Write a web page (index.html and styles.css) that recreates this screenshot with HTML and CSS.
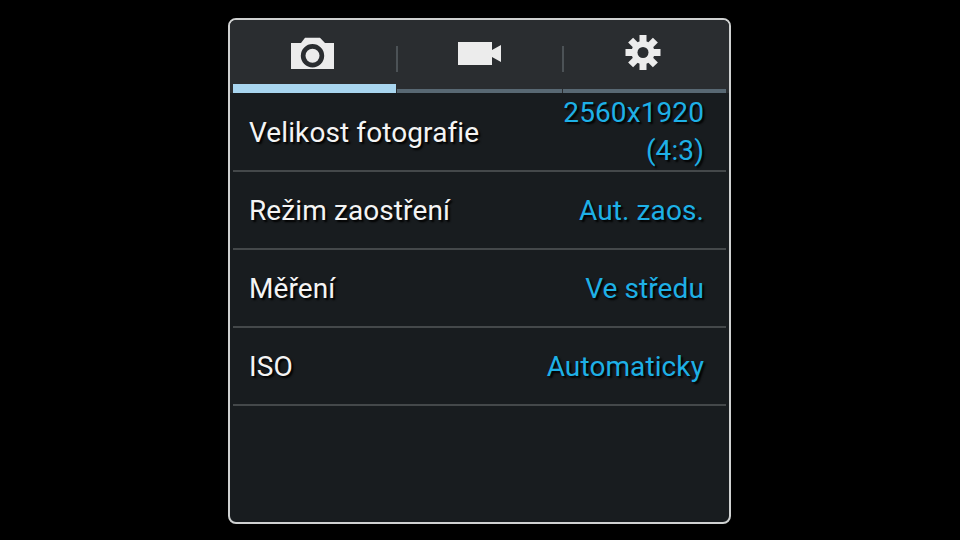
FILE: index.html
```html
<!DOCTYPE html>
<html lang="cs">
<head>
<meta charset="utf-8">
<title>Nastavení fotoaparátu</title>
<link rel="stylesheet" href="styles.css">
</head>
<body>
<main class="panel">
  <nav class="tabs">
    <div class="tab tab-active">
      <svg class="icon" width="43" height="32" viewBox="0 0 43 32"><path fill="#ececec" fill-rule="evenodd" d="M0 6H10L14 .7H29L34 6H43V32H0ZM21.500 7A11.700 11.700 0 1 0 21.500 30.400A11.700 11.700 0 1 0 21.500 7Z"/><circle cx="21.500" cy="18.700" r="7" fill="#ececec"/></svg>
    </div>
    <div class="tab tab-mid">
      <svg class="icon icon-video" width="43" height="23" viewBox="0 0 43 23"><path fill="#ececec" d="M0 0H34V23H0ZM34 8L43 3V20L34 15Z"/></svg>
    </div>
    <div class="tab tab-last">
      <svg class="icon icon-gear" width="36" height="36" viewBox="0 0 36 36">
        <g fill="#ececec">
          <circle cx="18" cy="17.500" r="11.500"/>
          <rect x="14.500" y="0" width="7" height="35"/>
          <rect x="14.500" y="0" width="7" height="35" transform="rotate(45 18 17.500)"/>
          <rect x="14.500" y="0" width="7" height="35" transform="rotate(90 18 17.500)"/>
          <rect x="14.500" y="0" width="7" height="35" transform="rotate(135 18 17.500)"/>
        </g>
        <circle cx="18" cy="17.500" r="5.500" fill="#2a2d30"/>
      </svg>
    </div>
  </nav>
  <section class="rows">
    <div class="row"><span class="label">Velikost fotografie</span><span class="value value-wrap">2560x1920<br>(4:3)</span></div>
    <div class="row"><span class="label">Režim zaostření</span><span class="value">Aut. zaos.</span></div>
    <div class="row"><span class="label">Měření</span><span class="value">Ve středu</span></div>
    <div class="row"><span class="label">ISO</span><span class="value">Automaticky</span></div>
  </section>
</main>
</body>
</html>
```
FILE: styles.css
```css
* { box-sizing: border-box; }
html, body { margin: 0; height: 100%; background: #000; }
body {
  width: 960px;
  height: 540px;
  overflow: hidden;
  font-family: Roboto, "Liberation Sans", sans-serif;
  padding: 18px 229px 16px 228px;
}
.panel {
  height: 506px;
  border: 2px solid #cfd1d1;
  border-radius: 8px;
  background: #181c1f;
  padding: 0 3px;
  overflow: hidden;
}
.tabs {
  display: grid;
  grid-template-columns: 163px 166px 164px;
  height: 73px;
  margin: 0 -3px;
  padding: 0 3px;
  background: #2a2d30;
}
.tab {
  position: relative;
  display: flex;
  justify-content: center;
  align-items: flex-start;
  border-bottom: 4px solid #586873;
}
.tab-active { border-bottom: 9px solid #a8d5ef; }
.tab-mid, .tab-last { margin-left: 1px; }
.tab-mid::after, .tab-last::after {
  content: "";
  position: absolute;
  left: -1px;
  top: 26px;
  width: 2px;
  height: 26px;
  background: #4c5256;
}
.icon { margin-top: 17px; }
.tab-active .icon { margin-right: 5px; }
.icon-video { margin-top: 22px; }
.icon-gear { margin-top: 15px; margin-right: 4px; }
.rows { display: flex; flex-direction: column; padding-top: 1px; }
.row {
  height: 78px;
  display: flex;
  justify-content: space-between;
  align-items: center;
  padding: 2px 22px 0 16px;
  border-bottom: 2px solid #44484a;
  font-size: 28px;
  letter-spacing: 0.1px;
  line-height: 38px;
  text-shadow: 2px 2px 2px #000;
}
.label { color: #f4f4f4; }
.value { color: #1eb0e6; text-align: right; }
.value-wrap { margin-bottom: 2px; }
```
